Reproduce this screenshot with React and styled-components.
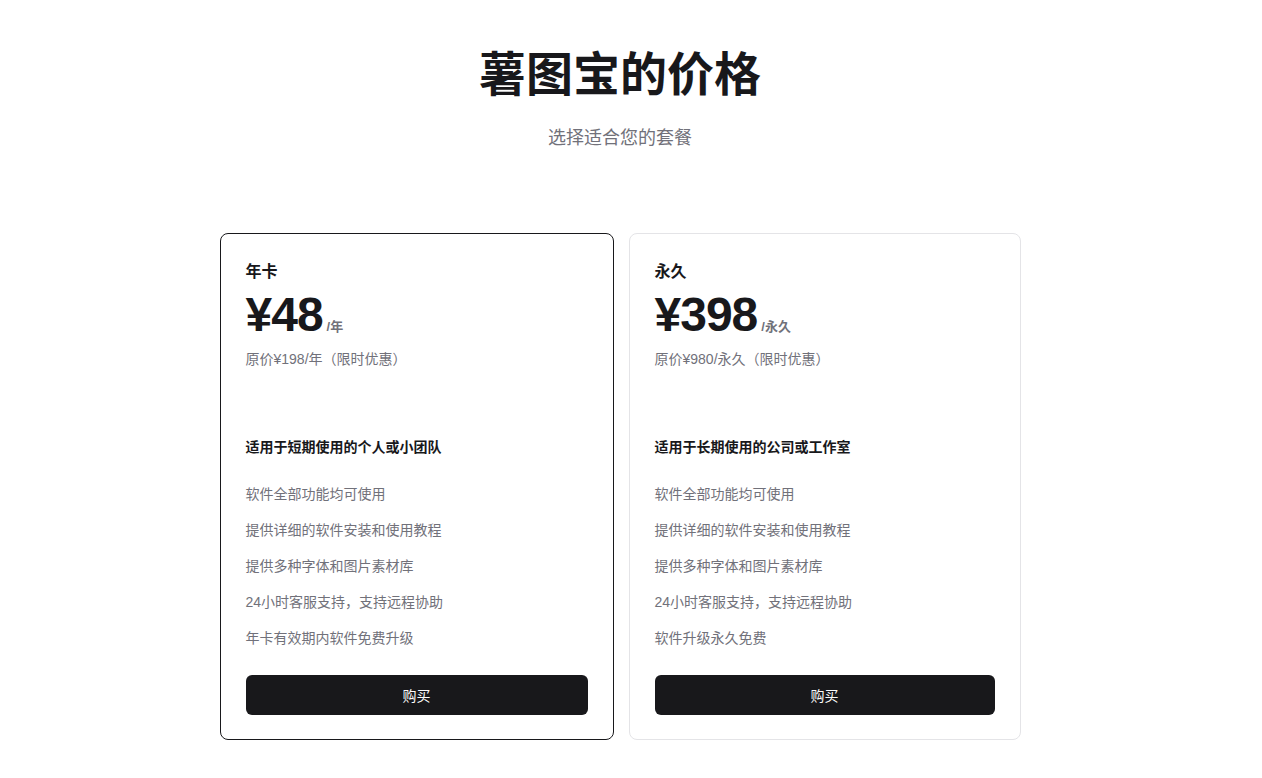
import React from 'react';
import styled, { createGlobalStyle } from 'styled-components';

const GlobalStyle = createGlobalStyle`
  html, body {
    margin: 0;
    padding: 0;
    background: #ffffff;
  }
  body {
    font-family: "Liberation Sans", "Noto Sans CJK SC", sans-serif;
    color: #18181b;
  }
`;

const Page = styled.div`
  padding: 46px 22px 40px 0;
  display: flex;
  flex-direction: column;
  align-items: center;
`;

const Title = styled.h1`
  margin: 0;
  font-size: 47px;
  line-height: 57.6px;
  font-weight: 700;
  color: #18181b;
`;

const Subtitle = styled.p`
  margin: 20px 0 0;
  font-size: 18px;
  line-height: 28px;
  color: #71717a;
`;

const CardRow = styled.div`
  margin-top: 81px;
  display: grid;
  grid-template-columns: 394px 392px;
  gap: 15px;
`;

const Card = styled.div`
  border: 1px solid ${p => (p.$featured ? '#18181b' : '#e4e4e7')};
  border-radius: 8px;
  padding: 25px 25px 24px;
  display: flex;
  flex-direction: column;
  background: #fff;
`;

const PlanName = styled.h3`
  margin: 1px 0 0;
  font-size: 16px;
  line-height: 24px;
  font-weight: 600;
`;

const PriceRow = styled.div`
  margin-top: 7px;
  display: flex;
  align-items: baseline;
`;

const Price = styled.span`
  font-size: 48px;
  line-height: 48px;
  font-weight: 700;
  letter-spacing: -1px;
`;

const Unit = styled.span`
  margin-left: 4px;
  font-size: 13px;
  font-weight: 600;
  color: #71717a;
`;

const Original = styled.p`
  margin: 10px 0 0;
  font-size: 14px;
  line-height: 20px;
  color: #71717a;
`;

const Audience = styled.p`
  margin: 68px 0 0;
  font-size: 14px;
  line-height: 20px;
  font-weight: 700;
`;

const Features = styled.ul`
  list-style: none;
  margin: 27px 0 0;
  padding: 0;
  display: flex;
  flex-direction: column;
  gap: 16px;
`;

const Feature = styled.li`
  font-size: 14px;
  line-height: 20px;
  color: #71717a;
`;

const BuyButton = styled.button`
  margin-top: 27px;
  height: 40px;
  border: none;
  border-radius: 6px;
  background: #18181b;
  color: #fafafa;
  font-family: inherit;
  font-size: 14px;
  font-weight: 400;
  cursor: pointer;
`;

const plans = [
  {
    name: '年卡',
    price: '¥48',
    unit: '/年',
    original: '原价¥198/年（限时优惠）',
    audience: '适用于短期使用的个人或小团队',
    features: [
      '软件全部功能均可使用',
      '提供详细的软件安装和使用教程',
      '提供多种字体和图片素材库',
      '24小时客服支持，支持远程协助',
      '年卡有效期内软件免费升级',
    ],
    featured: true,
  },
  {
    name: '永久',
    price: '¥398',
    unit: '/永久',
    original: '原价¥980/永久（限时优惠）',
    audience: '适用于长期使用的公司或工作室',
    features: [
      '软件全部功能均可使用',
      '提供详细的软件安装和使用教程',
      '提供多种字体和图片素材库',
      '24小时客服支持，支持远程协助',
      '软件升级永久免费',
    ],
    featured: false,
  },
];

const App = () => (
  <>
    <GlobalStyle />
    <Page>
      <Title>薯图宝的价格</Title>
      <Subtitle>选择适合您的套餐</Subtitle>
      <CardRow>
        {plans.map(plan => (
          <Card key={plan.name} $featured={plan.featured}>
            <PlanName>{plan.name}</PlanName>
            <PriceRow>
              <Price>{plan.price}</Price>
              <Unit>{plan.unit}</Unit>
            </PriceRow>
            <Original>{plan.original}</Original>
            <Audience>{plan.audience}</Audience>
            <Features>
              {plan.features.map(f => (
                <Feature key={f}>{f}</Feature>
              ))}
            </Features>
            <BuyButton>购买</BuyButton>
          </Card>
        ))}
      </CardRow>
    </Page>
  </>
);

export default App;
